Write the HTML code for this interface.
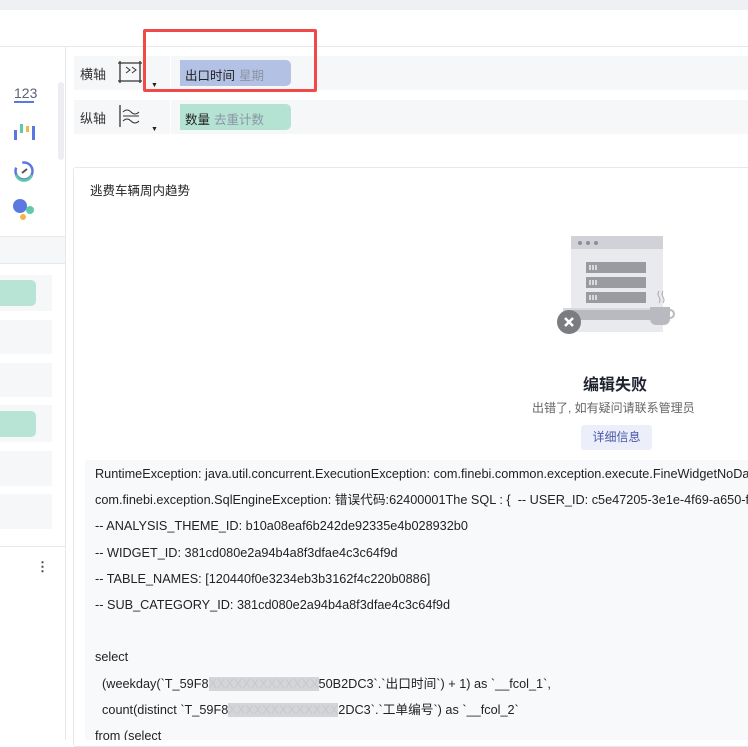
<!DOCTYPE html>
<html><head><meta charset="utf-8"><style>
*{margin:0;padding:0;box-sizing:border-box}
body{width:748px;height:740px;overflow:hidden;background:#fff;font-family:"Liberation Sans","Noto Sans CJK SC",sans-serif;position:relative;color:#222}
.a{position:absolute}
.row{position:absolute;left:74px;width:674px;height:34px;background:#f6f7f9}
.lab{position:absolute;left:6px;top:8px;font-size:13px;color:#333}
.pill{position:absolute;left:106px;top:4px;width:111px;height:26px;border-radius:0 5px 5px 0;font-size:12.5px;padding:5px 5px;color:#222}
.pill span{color:#8b93a5;margin-left:4px}
.sb{position:absolute;left:0;width:52px;background:#f6f7f9}
.err{position:absolute;left:85px;top:460px;width:663px;height:280px;background:#f8f9fb;font-size:12.7px;color:#222;padding:1px 10px;line-height:26.2px;white-space:pre;overflow:hidden}
</style></head><body>
<div class="a" style="left:0;top:0;width:748px;height:10px;background:#eef0f3"></div>
<div class="a" style="left:0;top:46px;width:748px;height:1px;background:#e6e8ec"></div>
<div class="a" style="left:65px;top:47px;width:1px;height:693px;background:#e6e8ec"></div>
<div class="a" style="left:14px;top:85px;font-size:14px;color:#5b6272">123</div>
<div class="a" style="left:14px;top:101px;width:20px;height:2px;background:#5b78e0"></div>
<svg class="a" style="left:13px;top:122px" width="24" height="20"><rect x="1" y="8" width="3" height="10" fill="#5b78e0"/><rect x="7" y="2" width="3" height="9" fill="#5fc9a9"/><rect x="13" y="4" width="3" height="6" fill="#f0b64a"/><rect x="19" y="4" width="3" height="14" fill="#5b78e0"/></svg>
<svg class="a" style="left:13px;top:160px" width="22" height="22"><circle cx="11" cy="11" r="8.5" fill="none" stroke="#5b78e0" stroke-width="2.5" stroke-dasharray="30 8"/><path d="M3 15 A8.5 8.5 0 0 0 19 15" fill="none" stroke="#5fc9a9" stroke-width="2.5"/><path d="M9 13 L14 9" stroke="#555" stroke-width="2"/></svg>
<div class="a" style="left:13px;top:199px;width:14px;height:14px;border-radius:50%;background:#5b78e0"></div>
<div class="a" style="left:26px;top:206px;width:8px;height:8px;border-radius:50%;background:#5fc9a9"></div>
<div class="a" style="left:20px;top:214px;width:6px;height:6px;border-radius:50%;background:#f0b64a"></div>
<div class="a" style="left:58px;top:82px;width:6px;height:78px;border-radius:3px;background:#eceef1"></div>
<div class="a" style="left:0;top:236px;width:65px;height:1px;background:#e6e8ec"></div>
<div class="a" style="left:0;top:237px;width:65px;height:26px;background:#f6f7f9"></div>
<div class="a" style="left:0;top:263px;width:65px;height:1px;background:#e6e8ec"></div>
<div class="sb" style="top:275px;height:36px"></div>
<div class="a" style="left:0;top:280px;width:36px;height:26px;background:#b7e4d5;border-radius:0 5px 5px 0"></div>
<div class="sb" style="top:320px;height:34px"></div>
<div class="sb" style="top:363px;height:34px"></div>
<div class="sb" style="top:405px;height:37px"></div>
<div class="a" style="left:0;top:411px;width:36px;height:26px;background:#b7e4d5;border-radius:0 5px 5px 0"></div>
<div class="sb" style="top:451px;height:35px"></div>
<div class="sb" style="top:494px;height:35px"></div>
<div class="a" style="left:0;top:546px;width:65px;height:1px;background:#e6e8ec"></div>
<div class="a" style="left:36px;top:559px;font-size:13px;color:#444;font-weight:bold">⋮</div>
<div class="row" style="top:56px">
<div class="lab">横轴</div>
<svg class="a" style="left:44px;top:4px" width="24" height="24"><path d="M2 1V23M22 1V23M0 3H24M0 21H24" stroke="#333" stroke-width="1.3" fill="none"/><path d="M8 7l4 3-4 3M14 7l4 3-4 3" stroke="#333" fill="none"/></svg>
<div class="a" style="left:77px;top:26px;font-size:7px">▼</div>
<div class="a" style="left:96px;top:0;width:1px;height:34px;background:#fff"></div>
<div class="pill" style="background:#b3c2e4">出口时间<span>星期</span></div>
</div>
<div class="row" style="top:100px">
<div class="lab">纵轴</div>
<svg class="a" style="left:44px;top:4px" width="24" height="24"><path d="M2 1V23" stroke="#333" stroke-width="1.3"/><path d="M5 8q4-4 8 0t8 0M5 17q4-4 8 0t8 0M5 12h16" stroke="#333" fill="none"/></svg>
<div class="a" style="left:77px;top:26px;font-size:7px">▼</div>
<div class="a" style="left:96px;top:0;width:1px;height:34px;background:#fff"></div>
<div class="pill" style="background:#b5e3d3">数量<span>去重计数</span></div>
</div>
<div class="a" style="left:143px;top:29px;width:174px;height:63px;border:3px solid #f0494a;border-radius:2px"></div>
<div class="a" style="left:73px;top:167px;width:680px;height:580px;border:1px solid #e6e8ec;border-radius:3px"></div>
<div class="a" style="left:90px;top:180px;font-size:12.5px;color:#222">逃费车辆周内趋势</div>
<svg class="a" style="left:555px;top:235px" width="125" height="105">
<rect x="16" y="1" width="92" height="96" fill="#e9eaee"/><rect x="16" y="1" width="92" height="13" fill="#d0d2d8"/>
<circle cx="25" cy="8" r="2" fill="#8d8f95"/><circle cx="33" cy="8" r="2" fill="#8d8f95"/><circle cx="41" cy="8" r="2" fill="#8d8f95"/>
<rect x="31" y="27" width="60" height="11" fill="#9a9ba1"/><rect x="31" y="42" width="60" height="11" fill="#9a9ba1"/><rect x="31" y="57" width="60" height="11" fill="#9a9ba1"/>
<path d="M35 30v5M38 30v5M41 30v5M35 45v5M38 45v5M41 45v5M35 60v5M38 60v5M41 60v5" stroke="#eee" stroke-width="1.5"/>
<rect x="8" y="73" width="106" height="12" fill="#d8d9dd"/><rect x="12" y="75" width="100" height="10" fill="#b9babf"/>
<path d="M95 72h20v12a6 6 0 0 1-6 6h-8a6 6 0 0 1-6-6z" fill="#b9babf"/><path d="M115 75a4 4 0 0 1 0 8" stroke="#b9babf" stroke-width="2" fill="none"/>
<path d="M104 56q-2 3 0 6t0 6M108 56q-2 3 0 6t0 6" stroke="#aaa" fill="none"/>
<circle cx="14" cy="87" r="12" fill="#7b7c80"/><path d="M10 83l8 8M18 83l-8 8" stroke="#fff" stroke-width="2.5"/>
</svg>
<div class="a" style="left:583px;top:371px;font-size:16px;font-weight:bold;color:#1f2330">编辑失败</div>
<div class="a" style="left:532px;top:399px;font-size:12px;color:#666">出错了, 如有疑问请联系管理员</div>
<div class="a" style="left:581px;top:425px;width:71px;height:25px;background:#eceef9;border-radius:3px;font-size:12px;color:#4a5aa8;text-align:center;line-height:25px">详细信息</div>
<div class="err">RuntimeException: java.util.concurrent.ExecutionException: com.finebi.common.exception.execute.FineWidgetNoDataException
com.finebi.exception.SqlEngineException: 错误代码:62400001The SQL : {  -- USER_ID: c5e47205-3e1e-4f69-a650-f4
-- ANALYSIS_THEME_ID: b10a08eaf6b242de92335e4b028932b0
-- WIDGET_ID: 381cd080e2a94b4a8f3dfae4c3c64f9d
-- TABLE_NAMES: [120440f0e3234eb3b3162f4c220b0886]
-- SUB_CATEGORY_ID: 381cd080e2a94b4a8f3dfae4c3c64f9d

select
  (weekday(`T_59F8<span style="color:#c8c9cc;background:#d4d5d8">XXXXXXXXXXXXX</span>50B2DC3`.`出口时间`) + 1) as `__fcol_1`,
  count(distinct `T_59F8<span style="color:#c8c9cc;background:#d4d5d8">XXXXXXXXXXXXX</span>2DC3`.`工单编号`) as `__fcol_2`
from (select</div>
</body></html>
